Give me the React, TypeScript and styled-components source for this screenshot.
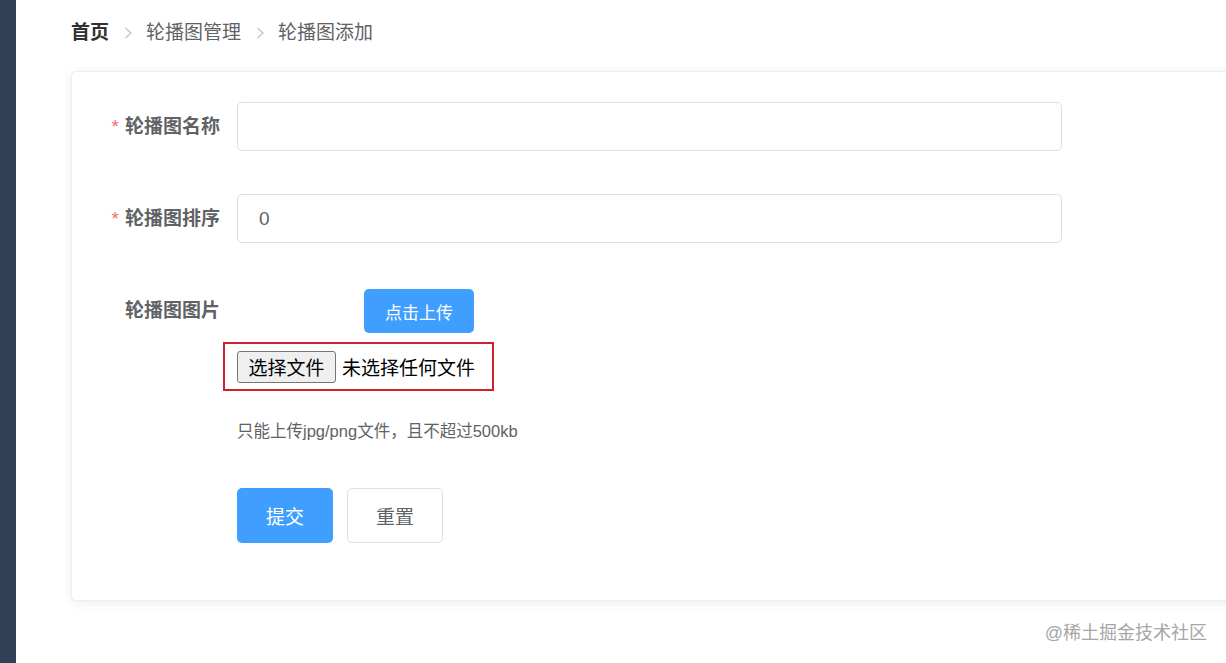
import React from 'react';
import styled, { createGlobalStyle } from 'styled-components';

const GlobalStyle = createGlobalStyle`
  html, body {
    margin: 0;
    padding: 0;
    background: #ffffff;
  }
  body {
    font-family: "Liberation Sans", "Noto Sans CJK SC", sans-serif;
    overflow: hidden;
  }
`;

const Page = styled.div`
  display: flex;
  width: 1226px;
  height: 663px;
  overflow: hidden;
  position: relative;
`;

const Sidebar = styled.div`
  width: 16px;
  flex-shrink: 0;
  background: #313f57;
`;

const Main = styled.div`
  flex: 1;
  padding: 20px 0 0 55px;
  min-width: 0;
`;

const Breadcrumb = styled.div`
  display: flex;
  align-items: center;
  height: 26px;
  font-size: 19px;
  line-height: 26px;
  color: #606266;
`;

const Crumb = styled.span<{ $strong?: boolean }>`
  font-weight: ${(p) => (p.$strong ? 700 : 400)};
  color: ${(p) => (p.$strong ? '#303133' : '#606266')};
`;

const Sep = styled.span`
  display: inline-flex;
  margin: 0 13px 0 15px;
  color: #c0c4cc;
`;

const Card = styled.div`
  margin-top: 25px;
  width: 1200px;
  height: 530px;
  box-sizing: border-box;
  background: #fff;
  border: 1px solid #ebeef5;
  border-radius: 5px;
  box-shadow: 0 2px 12px 0 rgba(0, 0, 0, 0.08);
  padding-top: 30px;
`;

const FormItem = styled.div<{ $gap: number }>`
  display: flex;
  align-items: flex-start;
  margin-bottom: ${(p) => p.$gap}px;
`;

const Label = styled.div<{ $h: number }>`
  width: 165px;
  flex-shrink: 0;
  box-sizing: border-box;
  padding-right: 17px;
  text-align: right;
  font-size: 19px;
  font-weight: 700;
  color: #606266;
  line-height: ${(p) => p.$h}px;
  height: ${(p) => p.$h}px;
`;

const Star = styled.span`
  color: #f56c6c;
  font-weight: 400;
  margin-right: 6px;
`;

const Content = styled.div`
  display: flex;
  flex-direction: column;
`;

const TextInput = styled.div`
  width: 825px;
  height: 49px;
  box-sizing: border-box;
  border: 1px solid #dcdfe6;
  border-radius: 5px;
  padding-left: 21px;
  font-size: 19px;
  line-height: 47px;
  color: #606266;
`;

const UploadLine = styled.div`
  height: 50px;
  display: flex;
  align-items: center;
  padding-left: 127px;
`;

const BlueButton = styled.div<{ $w: number; $h: number; $fs: number }>`
  width: ${(p) => p.$w}px;
  height: ${(p) => p.$h}px;
  background: #409eff;
  border-radius: 5px;
  color: #fff;
  font-size: ${(p) => p.$fs}px;
  display: flex;
  align-items: center;
  justify-content: center;
`;

const FileBox = styled.div`
  margin: 6px 0 0 -14px;
  width: 271px;
  height: 49px;
  box-sizing: border-box;
  border: 2px solid #d0202e;
  display: flex;
  align-items: center;
  padding-left: 12px;
`;

const FileButton = styled.div`
  width: 99px;
  height: 32px;
  box-sizing: border-box;
  background: #efefef;
  border: 1px solid #767676;
  border-radius: 3px;
  font-size: 19px;
  color: #000;
  display: flex;
  align-items: center;
  justify-content: center;
`;

const FileText = styled.span`
  margin-left: 6px;
  font-size: 19px;
  color: #000;
`;

const Hint = styled.div`
  margin-top: 29px;
  font-size: 16.5px;
  line-height: 22px;
  color: #606266;
`;

const Actions = styled.div`
  display: flex;
  gap: 14px;
  padding-left: 165px;
`;

const PlainButton = styled.div`
  width: 96px;
  height: 55px;
  box-sizing: border-box;
  border: 1px solid #dcdfe6;
  border-radius: 5px;
  background: #fff;
  color: #606266;
  font-size: 19px;
  display: flex;
  align-items: center;
  justify-content: center;
`;

const Watermark = styled.div`
  position: absolute;
  right: 19px;
  bottom: 18px;
  font-size: 18px;
  color: #a6a6a6;
  line-height: 24px;
`;

const Chevron = () => (
  <svg width="9" height="12" viewBox="0 0 9 12">
    <path d="M1.5 1 L7 6 L1.5 11" fill="none" stroke="currentColor" strokeWidth="1.3" />
  </svg>
);

export default function App() {
  return (
    <Page>
      <GlobalStyle />
      <Sidebar />
      <Main>
        <Breadcrumb>
          <Crumb $strong>首页</Crumb>
          <Sep><Chevron /></Sep>
          <Crumb>轮播图管理</Crumb>
          <Sep><Chevron /></Sep>
          <Crumb>轮播图添加</Crumb>
        </Breadcrumb>
        <Card>
          <FormItem $gap={43}>
            <Label $h={49}><Star>*</Star>轮播图名称</Label>
            <TextInput />
          </FormItem>
          <FormItem $gap={43}>
            <Label $h={49}><Star>*</Star>轮播图排序</Label>
            <TextInput>0</TextInput>
          </FormItem>
          <FormItem $gap={46}>
            <Label $h={50}>轮播图图片</Label>
            <Content>
              <UploadLine>
                <BlueButton $w={110} $h={44} $fs={17}>点击上传</BlueButton>
              </UploadLine>
              <FileBox>
                <FileButton>选择文件</FileButton>
                <FileText>未选择任何文件</FileText>
              </FileBox>
              <Hint>只能上传jpg/png文件，且不超过500kb</Hint>
            </Content>
          </FormItem>
          <Actions>
            <BlueButton $w={96} $h={55} $fs={19}>提交</BlueButton>
            <PlainButton>重置</PlainButton>
          </Actions>
        </Card>
      </Main>
      <Watermark>@稀土掘金技术社区</Watermark>
    </Page>
  );
}
